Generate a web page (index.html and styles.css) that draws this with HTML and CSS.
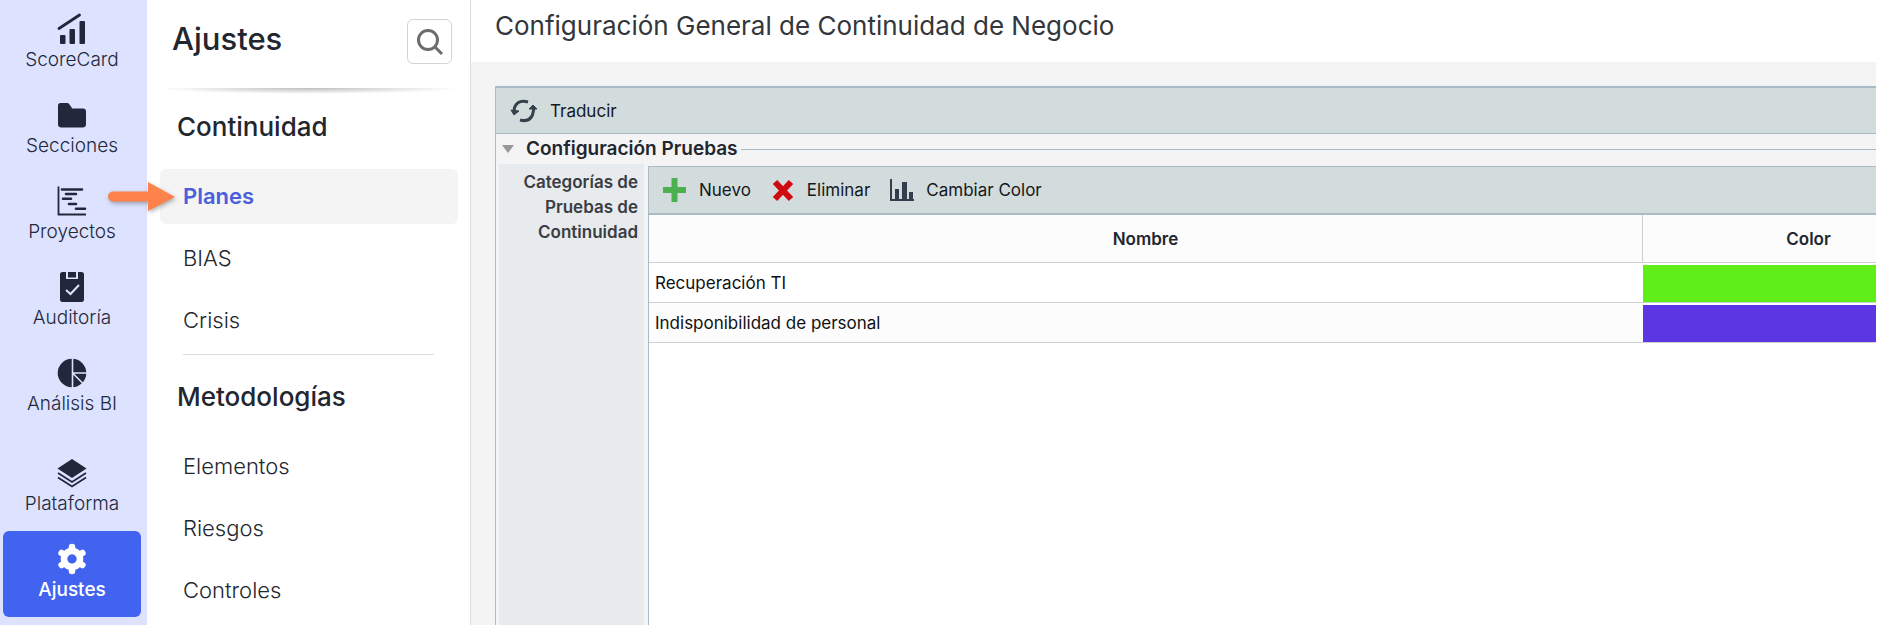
FILE: index.html
```html
<!DOCTYPE html>
<html lang="es">
<head>
  <meta charset="UTF-8">
  <meta name="viewport" content="width=device-width, initial-scale=1.0">
  <title>Configuración General de Continuidad de Negocio</title>
  <link rel="stylesheet" href="styles.css">
</head>
<body>
  <div class="app">
    <nav class="sidebar">
      <a href="#" class="side-item">
        <svg width="30" height="32" viewBox="0 0 30 32">
          <path d="M2 15.500L22.500 2" stroke="currentColor" stroke-width="2.800" stroke-linecap="round"/>
          <rect x="3" y="22" width="5.500" height="9" rx="1"/>
          <rect x="12.500" y="16" width="5.500" height="15" rx="1"/>
          <rect x="22.500" y="8" width="5.500" height="23" rx="1"/>
        </svg>
        <span>ScoreCard</span>
      </a>
      <a href="#" class="side-item">
        <svg width="30" height="32" viewBox="0 0 30 32">
          <path d="M3.500 4H10q1.500 0 2.300 1.200l3 4.300H26q3 0 3 3V25q0 3.500-3.500 3.500h-21Q1 28.500 1 25V6.500Q1 4 3.500 4z"/>
        </svg>
        <span>Secciones</span>
      </a>
      <a href="#" class="side-item">
        <svg width="30" height="32" viewBox="0 0 30 32" fill="none" stroke="currentColor">
          <path d="M1.500 1.500v28H29" stroke-width="1.800"/>
          <path d="M5 4.500h20M9 9h10M6 13.700h8M12 19h7M19 23.700h9" stroke-width="2.600" stroke-linecap="round"/>
        </svg>
        <span>Proyectos</span>
      </a>
      <a href="#" class="side-item">
        <svg width="30" height="32" viewBox="0 0 30 32">
          <path d="M5.500 1H9v7h12V1h3.500Q27 1 27 3.500v25q0 2.500-2.500 2.500h-19Q3 31 3 28.500v-25Q3 1 5.500 1z"/>
          <rect x="11" y="1" width="8" height="5.500"/>
          <path d="M9 19l4.500 4 8.500-9" fill="none" stroke="#dde2ff" stroke-width="2"/>
        </svg>
        <span>Auditoría</span>
      </a>
      <a href="#" class="side-item">
        <svg width="30" height="32" viewBox="0 0 30 32">
          <circle cx="15" cy="16" r="14.300"/>
          <path d="M15.500 1v30M15.500 16H30M15.500 16l11 11" stroke="#dde2ff" stroke-width="1.600"/>
        </svg>
        <span>Análisis BI</span>
      </a>
      <a href="#" class="side-item side-item-gap">
        <svg width="30" height="32" viewBox="0 0 30 32">
          <path d="M15 2l14.500 9.500L15 21 .5 11.500z"/>
          <path d="M1 16l14 9 14-9M1 20.500l14 9 14-9" fill="none" stroke="currentColor" stroke-width="1.800"/>
        </svg>
        <span>Plataforma</span>
      </a>
      <a href="#" class="side-item active">
        <svg width="30" height="32" viewBox="0 0 30 32">
          <circle cx="15" cy="16" r="8" fill="none" stroke="currentColor" stroke-width="6.500"/>
          <path d="M15 4v4M25.400 10l-3.500 2M25.400 22l-3.500-2M15 28v-4M4.600 22l3.500-2M4.600 10l3.500 2" stroke="currentColor" stroke-width="6.500" stroke-linecap="round"/>
        </svg>
        <span>Ajustes</span>
      </a>
    </nav>

    <aside class="settings">
      <div class="settings-head">
        <h1>Ajustes</h1>
        <button type="button" class="search-btn" aria-label="Buscar">
          <svg width="28" height="28" viewBox="0 0 28 28" fill="none" stroke="#6a6c70" stroke-width="3">
            <circle cx="12" cy="12" r="9.500"/>
            <path d="M19 19l7 7"/>
          </svg>
        </button>
      </div>
      <div class="settings-shadow"></div>

      <h2>Continuidad</h2>
      <ul class="menu">
        <li>
          <a href="#" class="selected">Planes</a>
          <svg class="pointer" width="70" height="34" viewBox="0 0 70 34">
            <path d="M5 11.500h35V2l27 15-27 14V21.500H5a5 5 0 0 1 0-10z" fill="#fd824b"/>
          </svg>
        </li>
        <li><a href="#">BIAS</a></li>
        <li><a href="#">Crisis</a></li>
      </ul>
      <hr>
      <h2>Metodologías</h2>
      <ul class="menu">
        <li><a href="#">Elementos</a></li>
        <li><a href="#">Riesgos</a></li>
        <li><a href="#">Controles</a></li>
      </ul>
    </aside>

    <main class="content">
      <header class="page-title">Configuración General de Continuidad de Negocio</header>
      <div class="workspace">
        <div class="panel">
          <div class="toolbar toolbar-main">
            <button type="button">
              <svg width="28" height="24" viewBox="0 0 28 24" fill="none" stroke="#36404c" stroke-width="3">
                <path d="M18 3Q8 0 4.500 8.500L4 13M10 21q9 2.500 12.500-5L24 9"/>
                <path d="M1 11l3 5 5-4zM19 10l4-4 4 4z" fill="#36404c" stroke-width="1"/>
              </svg>
              Traducir
            </button>
          </div>

          <div class="section-title">
            <button type="button" class="collapse" aria-label="Contraer"></button>
            <h3>Configuración Pruebas</h3>
          </div>

          <div class="field">
            <div class="field-label">Categorías de Pruebas de Continuidad</div>
            <div class="grid">
              <div class="toolbar toolbar-grid">
                <button type="button">
                  <svg width="24" height="26" viewBox="0 0 24 26"><path d="M8.500 1h6v9H23v6h-8.500v9h-6v-9H0v-6h8.500z" fill="#4caf50"/></svg>
                  Nuevo
                </button>
                <button type="button">
                  <svg width="24" height="26" viewBox="0 0 24 26"><path d="M4 5l16 17M20 5L4 22" stroke="#cf0a10" stroke-width="6"/></svg>
                  Eliminar
                </button>
                <button type="button">
                  <svg width="24" height="26" viewBox="0 0 24 26" fill="#333d4b"><path d="M0 2h2v20h22v2H0zM5 12h4v10H5zM12 5h5v17h-5zM19 15h4v7h-4z"/></svg>
                  Cambiar Color
                </button>
              </div>
              <table>
                <thead>
                  <tr><th class="col-name">Nombre</th><th>Color</th></tr>
                </thead>
                <tbody>
                  <tr><td>Recuperación TI</td><td class="swatch"><div class="green"></div></td></tr>
                  <tr><td>Indisponibilidad de personal</td><td class="swatch"><div class="purple"></div></td></tr>
                </tbody>
              </table>
            </div>
          </div>
        </div>
      </div>
    </main>
  </div>
</body>
</html>
```
FILE: styles.css
```css
* {
  box-sizing: border-box;
}

body {
  margin: 0;
  font-family: Inter, "Open Sans", sans-serif;
  color: #22262e;
  background-color: #fff;
}

h1, h2, h3, ul {
  margin: 0;
  padding: 0;
  font-weight: 500;
}

a {
  color: inherit;
  text-decoration: none;
}

button {
  font: inherit;
  color: inherit;
  background: none;
  border: none;
  padding: 0;
  cursor: pointer;
}

svg {
  display: block;
  flex-shrink: 0;
}

.app {
  display: flex;
  height: 100vh;
  overflow: hidden;
}

/* left bar */
.sidebar {
  width: 147px;
  flex-shrink: 0;
  padding: 1px 6px 0 3px;
  background-color: #dde2ff;
}

.side-item {
  display: flex;
  flex-direction: column;
  align-items: center;
  gap: 3px;
  height: 86px;
  padding-top: 12px;
  border-radius: 6px;
  font-size: 19px;
  line-height: 24px;
  font-weight: 300;
  color: #22283c;
}

.side-item svg {
  fill: currentColor;
}

.side-item svg[fill="none"] {
  fill: none;
}

.side-item-gap {
  margin-top: 14px;
}

.side-item.active {
  background-color: #4263f0;
  color: #fff;
  font-weight: 500;
}

/* settings menu */
.settings {
  width: 324px;
  flex-shrink: 0;
  border-right: 1px solid #dcdde0;
}

.settings-head {
  display: flex;
  justify-content: space-between;
  height: 88px;
  padding: 19px 18px 0 25px;
}

.settings-head h1 {
  font-size: 31px;
  line-height: 40px;
}

.search-btn {
  display: flex;
  align-items: center;
  justify-content: center;
  width: 45px;
  height: 45px;
  border: 1px solid #d3d4d8;
  border-radius: 6px;
}

.settings-shadow {
  height: 6px;
  margin: 0 10px;
  background: radial-gradient(ellipse at top, #bdbdbd, #fff 70%);
}

.settings h2 {
  padding: 15px 30px 0;
  font-size: 26px;
  line-height: 36px;
}

.menu {
  display: flex;
  flex-direction: column;
  gap: 7px;
  padding: 24px 12px 0 13px;
  list-style: none;
}

.menu li {
  position: relative;
}

.menu a {
  display: block;
  padding: 0 23px;
  font-size: 22px;
  line-height: 55px;
  font-weight: 300;
  border-radius: 6px;
}

.menu a.selected {
  background-color: #f4f4f4;
  color: #4a5fd9;
  font-weight: 600;
}

.pointer {
  position: absolute;
  left: -52px;
  top: 11px;
  filter: drop-shadow(1px 2px 2px rgba(0, 0, 0, 0.3));
}

.settings hr {
  margin: 6px 36px 9px;
  border: none;
  border-top: 1px solid #dcdfe2;
}

/* content */
.content {
  display: flex;
  flex-direction: column;
  flex: 1;
  min-width: 0;
  padding-right: 3px;
}

.page-title {
  height: 62px;
  padding-left: 24px;
  font-size: 26px;
  line-height: 52px;
  color: #33363b;
}

.workspace {
  display: flex;
  flex: 1;
  padding: 24px 0 0 24px;
  background-color: #f4f4f4;
}

.panel {
  display: flex;
  flex-direction: column;
  flex: 1;
  min-width: 0;
  border-left: 1px solid #a9bcd4;
}

.toolbar {
  display: flex;
  align-items: center;
  gap: 20px;
  height: 48px;
  padding-left: 14px;
  background-color: #d2dcdc;
  border-top: 1px solid #a9bbc6;
  border-bottom: 1px solid #a9bbc6;
  font-size: 17px;
  color: #15181c;
}

.toolbar-main {
  border-top-width: 2px;
}

.toolbar-grid {
  height: 49px;
  border-bottom-width: 2px;
}

.toolbar button {
  display: flex;
  align-items: center;
  gap: 12px;
}

.section-title {
  display: flex;
  align-items: center;
  height: 30px;
  padding-left: 6px;
}

.section-title h3 {
  padding: 0 3px 0 12px;
  font-size: 19px;
  line-height: 28px;
  font-weight: 600;
}

.section-title::after {
  content: "";
  flex: 1;
  border-top: 1px solid #a9b8c6;
}

.collapse {
  border-left: 6px solid transparent;
  border-right: 6px solid transparent;
  border-top: 8px solid #96989c;
}

.field {
  display: flex;
  flex: 1;
}

.field-label {
  width: 145px;
  flex-shrink: 0;
  margin: 0 4px 0 3px;
  padding: 6px 6px 0;
  background-color: #e7ebed;
  font-size: 17px;
  line-height: 25px;
  font-weight: 600;
  text-align: right;
  color: #3a3d42;
}

.grid {
  flex: 1;
  min-width: 0;
  margin-top: 2px;
  border-left: 1px solid #a9bbc6;
  background-color: #fff;
  overflow: hidden;
}

/* wider than its frame, the last column runs past the edge */
table {
  width: 108%;
  table-layout: fixed;
  border-collapse: separate;
  border-spacing: 0;
  font-size: 17px;
  color: #111;
}

th {
  height: 48px;
  padding: 0;
  background-color: #fcfcfc;
  border-bottom: 1px solid #cdd1d4;
  font-weight: 600;
  color: #22262e;
}

.col-name {
  width: 75%;
  border-right: 1px solid #cdd1d4;
}

td {
  height: 40px;
  padding: 0 6px;
  border-bottom: 1px solid #cdd1d4;
}

tbody tr:nth-child(even) {
  background-color: #fcfcfc;
}

td.swatch {
  padding: 2px 0 0;
}

.swatch div {
  height: 37px;
}

.green {
  background-color: #5fee18;
}

.purple {
  background-color: #5b36e2;
}
```
